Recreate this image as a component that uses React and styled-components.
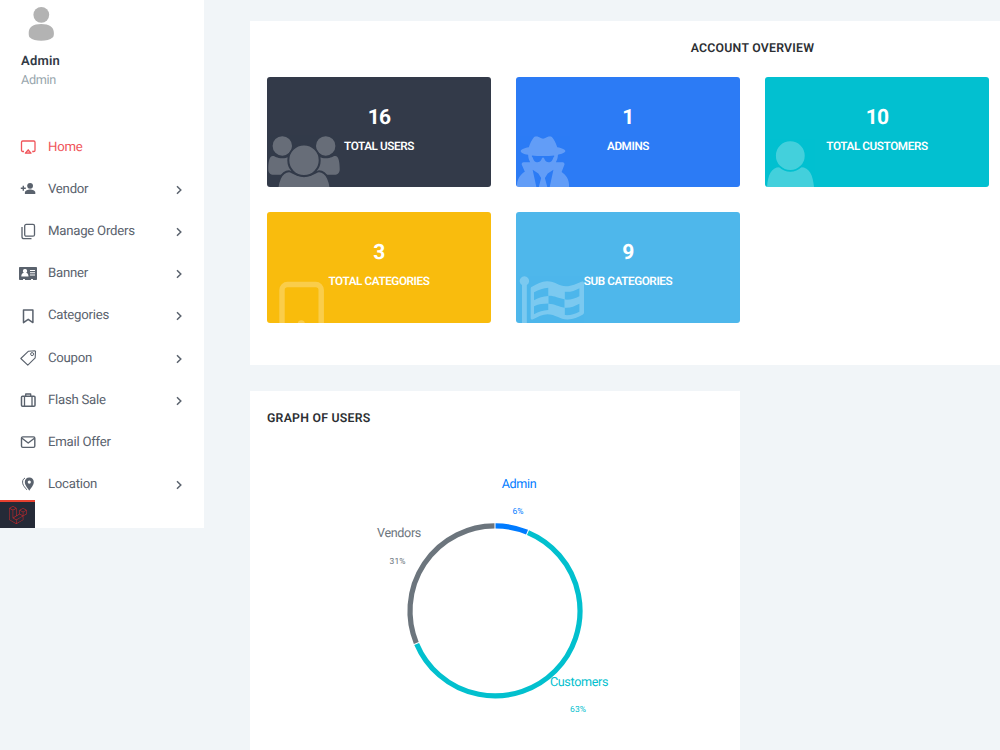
import styled, { createGlobalStyle } from "styled-components";
import { FaUserSecret } from "react-icons/fa";
import { SiLaravel } from "react-icons/si";

const menu = [
  { label: "Home", icon: AirplayIcon, active: true },
  { label: "Vendor", icon: VendorIcon, more: true },
  { label: "Manage Orders", icon: CopyIcon, more: true },
  { label: "Banner", icon: CardIcon, more: true },
  { label: "Categories", icon: BookmarkIcon, more: true },
  { label: "Coupon", icon: TagIcon, more: true },
  { label: "Flash Sale", icon: CaseIcon, more: true },
  { label: "Email Offer", icon: MailIcon },
  { label: "Location", icon: PinIcon, more: true },
];

const stats = [
  { value: 16, label: "TOTAL USERS", color: "#333a49", art: PeopleArt },
  { value: 1, label: "ADMINS", color: "#2c7bf5", art: SecretArt },
  { value: 10, label: "TOTAL CUSTOMERS", color: "#02c0d0", art: PersonArt },
  { value: 3, label: "TOTAL CATEGORIES", color: "#f9bc0d", art: TabletArt },
  { value: 9, label: "SUB CATEGORIES", color: "#4eb7eb", art: FlagArt },
];

const slices = [
  { name: "Admin", share: 1 / 16, percent: "6%", color: "#007bff", x: 269, y: 93, px: 268, py: 120 },
  { name: "Customers", share: 10 / 16, percent: "63%", color: "#02c0ce", x: 329, y: 291, px: 328, py: 318 },
  { name: "Vendors", share: 5 / 16, percent: "31%", color: "#6c757d", x: 149, y: 142.5, px: 147.5, py: 170 },
];

export default function App() {
  return (
    <>
      <GlobalStyle />
      <Page>
        <Sidebar />
        <Main>
          <Panel $width={1005} $height={343.5}>
            <PanelTitle $align="center">ACCOUNT OVERVIEW</PanelTitle>
            <StatGrid>
              {stats.map((stat) => (
                <StatCard key={stat.label} {...stat} />
              ))}
            </StatGrid>
          </Panel>
          <Panel $width={490} $height={400}>
            <PanelTitle>GRAPH OF USERS</PanelTitle>
            <UsersChart />
          </Panel>
        </Main>
      </Page>
    </>
  );
}

function Sidebar() {
  return (
    <SidebarContainer>
      <Profile>
        <svg width="40" height="44" viewBox="0 0 40 44" fill="#b3b3b3">
          <circle cx="20.3" cy="14.8" r="7.9" />
          <path d="M7.700 33c0-6 4.500-9 12.500-9s12.700 3 12.700 9c0 2.500-.4 3.800-1.300 4.600-2.500 2.200-6.700 3.200-11.400 3.200s-9-1-11.300-3.200c-.8-.8-1.200-2-1.200-4.600z" />
        </svg>
        <ProfileName>Admin</ProfileName>
        <ProfileRole>Admin</ProfileRole>
      </Profile>
      <Menu>
        {menu.map(({ label, icon: Icon, active, more }) => (
          <MenuItem key={label} $active={active}>
            <MenuIcon>
              <Icon />
            </MenuIcon>
            <MenuLabel>{label}</MenuLabel>
            {more && (
              <Chevron viewBox="0 0 8 10">
                <path d="M2 1.200 5.800 5 2 8.800" />
              </Chevron>
            )}
          </MenuItem>
        ))}
      </Menu>
      <DebugBadge>
        <SiLaravel size={18} />
      </DebugBadge>
    </SidebarContainer>
  );
}

function StatCard({ value, label, color, art: Art }) {
  return (
    <Card $color={color}>
      <CardArt viewBox="0 0 224 110">
        <Art color={color} />
      </CardArt>
      <CardValue>{value}</CardValue>
      <CardLabel>{label}</CardLabel>
    </Card>
  );
}

function UsersChart() {
  const radius = 85;
  let start = 0;
  return (
    <Chart viewBox="0 0 490 360">
      {slices.map(({ name, share, color }) => {
        const from = start * 2 * Math.PI + 0.006;
        start += share;
        const to = start * 2 * Math.PI - 0.006;
        const point = (a) =>
          `${245 + radius * Math.sin(a)} ${220.9 - radius * Math.cos(a)}`;
        return (
          <path
            key={name}
            d={`M${point(from)}A${radius} ${radius} 0 ${share > 0.5 ? 1 : 0} 1 ${point(to)}`}
            stroke={color}
            strokeWidth="5.2"
            fill="none"
          />
        );
      })}
      {slices.map(({ name, percent, color, x, y, px, py }) => (
        <g key={name} fill={color} textAnchor="middle">
          <ChartLabel x={x} y={y + 4.5}>
            {name}
          </ChartLabel>
          <ChartPercent x={px} y={py + 4}>
            {percent}
          </ChartPercent>
        </g>
      ))}
    </Chart>
  );
}

// card artwork, on the 224x110 grid of a card
function PeopleArt({ color }) {
  return (
    <>
      <circle cx="15.3" cy="68.7" r="9.7" />
      <circle cx="58.7" cy="68.7" r="9.7" />
      <path d="M1.300 92c0-7 1-13.300 4.500-13.300 2 0 4 2.300 9.500 2.300s7-2 9-2V97.500H7c-4 0-5.700-2-5.700-5.500z" />
      <path d="M72.700 92c0-7-1-13.300-4.500-13.300-2 0-4 2.300-9.500 2.300s-7-2-9-2V97.500H67c4 0 5.700-2 5.700-5.500z" />
      <g stroke={color} strokeWidth="2">
        <path d="M10 118c0-13 4-24 12-24 3 0 6 5 15 5s12-5 15-5c8 0 12 11 12 24z" />
        <circle cx="37" cy="83" r="15.7" />
      </g>
    </>
  );
}

function SecretArt() {
  return (
    <g transform="translate(1 59)">
      <FaUserSecret size={59.5} viewBox="0 0 512 512" />
    </g>
  );
}

function PersonArt({ color }) {
  return (
    <>
      <path d="M1.700 120c0-17 2-30 13-30 3 0 5 4 10.700 4s7.500-4 10.500-4c11 0 13.500 13 13.500 30z" />
      <circle cx="25.3" cy="78.4" r="15.2" stroke={color} strokeWidth="1.6" />
    </>
  );
}

function TabletArt() {
  return (
    <>
      <rect x="15" y="72.2" width="39.2" height="60" rx="5.5" fill="none" stroke="#fff" strokeWidth="5.4" />
      <circle cx="34.3" cy="111.5" r="3.5" />
    </>
  );
}

function FlagArt() {
  return (
    <>
      <path d="M6 120V72.800a4.700 4.700 0 1 1 4.800 0V120z" />
      <path
        fillRule="evenodd"
        d="M14.700 76.500c0-1 .4-1.600 1.300-2 5-2.900 9.500-5.500 15-5.500 8 0 12 5 19 5 6 0 10.500-2.600 15.500-4.500 1.400-.5 2.500.2 2.500 1.500v29c0 1.200-.5 2-1.500 2.500-4.500 2.600-9 4.700-15 4.700-8 0-12-5.200-20-5.200-5 0-9.500 2.500-14.500 5-1.300.6-2.300 0-2.300-1.300zM18 80v8c5-2.500 9-4 14.300-4.300V75.500C27 75.800 23 77.500 18 80zM32.500 83.500v8c6 0 10 3 16 4v-8.500c-6-1-10-3.700-16-3.500zM48.800 79.500v7.800c5.500.5 9.600-1 14.600-3.400v-8c-5 2.400-9 4.200-14.600 3.600zM18 94v8c5-2.500 9-4 14.300-4.300v-6.500C27 91.500 23 91.500 18 94zM48.800 95.500v7.300c5.500.5 9.600-1 14.600-3.400v-8c-5 2.400-9 4.500-14.600 4.100z"
      />
    </>
  );
}

// menu icons, on an 18x18 grid
function AirplayIcon() {
  return (
    <Icon>
      <path d="M5 13.500H3.700c-.7 0-1.200-.5-1.200-1.200V4.200C2.500 3.500 3 3 3.700 3h11.100c.7 0 1.200.5 1.200 1.200v8.100c0 .7-.5 1.200-1.200 1.200h-1.600" />
      <path d="M9.200 11.800 12 15.200H6.400z" strokeWidth="1.3" fill="currentColor" fillOpacity="0.4" />
    </Icon>
  );
}

function VendorIcon() {
  return (
    <Icon>
      <path d="M4.300 5.800v5M1.800 8.300h5" strokeWidth="1.4" />
      <g fill="currentColor" stroke="none">
        <circle cx="11.1" cy="5.800" r="2.9" />
        <path d="M5.900 14v-1.500c0-1.900 3-2.900 5.200-2.900s5.200 1 5.200 2.900V14z" />
      </g>
    </Icon>
  );
}

function CopyIcon() {
  return (
    <Icon>
      <rect x="5.7" y="2.4" width="9.8" height="11.8" rx="1.5" />
      <path d="M3 5v9.700c0 1.200.8 2 2 2H12.500" />
    </Icon>
  );
}

function CardIcon() {
  return (
    <Icon>
      <path
        fill="currentColor"
        stroke="none"
        fillRule="evenodd"
        d="M.8 2h16.400c.5 0 .8.300.8.800v11.400c0 .5-.3.800-.8.800H14v-1h-2v1H6v-1H4v1H.8c-.5 0-.8-.3-.8-.8V2.800C0 2.300.3 2 .8 2zM6 4a2 2 0 0 0-1.200 3.700C3 8.200 2.300 9.500 2.300 11.500h7.200c0-2-.7-3.300-2.300-3.800A2 2 0 0 0 6 4zm5 1v1h5V5zm0 2.200v1h5v-1zm0 2.200v1h5v-1z"
      />
    </Icon>
  );
}

function BookmarkIcon() {
  return (
    <Icon>
      <path d="M4.500 3h9.400v12.600L9.200 12.300l-4.700 3.300z" strokeWidth="1.5" />
    </Icon>
  );
}

function TagIcon() {
  return (
    <Icon>
      <path d="M9.500 2.200 16 1.800l.5.500-.3 6.500-7.400 7.300-7-6.600z" strokeWidth="1.1" />
      <circle cx="13.1" cy="5.1" r="1.5" strokeWidth="1" />
    </Icon>
  );
}

function CaseIcon() {
  return (
    <Icon>
      <rect x="2.5" y="5.2" width="13.5" height="10" rx="1" strokeWidth="1.5" />
      <path d="M5.500 5.200v10M13 5.200v10M6.700 5V3h5V5" />
    </Icon>
  );
}

function MailIcon() {
  return (
    <Icon>
      <rect x="2.5" y="3.9" width="13.3" height="10.5" rx="1.3" strokeWidth="1.4" />
      <path d="M3 5.200l6.200 4.800L15.400 5.200" strokeWidth="1.4" />
    </Icon>
  );
}

function PinIcon() {
  return (
    <Icon>
      <path
        fill="currentColor"
        stroke="none"
        fillRule="evenodd"
        d="M10.300 1.500c2.600 0 4.500 1.900 4.500 4.500 0 3.500-3 6-4.500 8.800C8.800 12 5.800 9.500 5.800 6c0-2.600 1.900-4.500 4.500-4.500zm0 3a1.600 1.600 0 1 0 0 3.200 1.600 1.600 0 0 0 0-3.200z"
      />
      <path d="M6 2C3.600 3.300 3.200 5.500 3.800 7.800c.5 2 2.300 3.800 4 6" strokeWidth="1" />
    </Icon>
  );
}

const GlobalStyle = createGlobalStyle`
  * {
    box-sizing: border-box;
  }

  body {
    margin: 0;
    background: #f1f5f8;
    font-family: Roboto, "Liberation Sans", sans-serif;
    text-rendering: geometricPrecision;
    overflow: hidden;
  }
`;

const Page = styled.div`
  display: flex;
  align-items: flex-start;
  height: 750px;
  overflow: hidden;
`;

const SidebarContainer = styled.aside`
  position: relative;
  flex: none;
  width: 204px;
  height: 528px;
  background: #fff;
`;

const Profile = styled.div`
  height: 126px;
  padding-left: 21px;

  svg {
    display: block;
  }
`;

const ProfileName = styled.div`
  margin-top: 9px;
  color: #323a46;
  font-size: 13px;
  font-weight: 600;
  line-height: 18px;
  letter-spacing: 0.2px;
`;

const ProfileRole = styled.div`
  color: #98a6ad;
  font-size: 12.7px;
  line-height: 19px;
  letter-spacing: -0.35px;
`;

const Menu = styled.ul`
  margin: 0;
  padding: 0;
  list-style: none;
`;

const MenuItem = styled.li`
  display: flex;
  align-items: center;
  height: 42.2px;
  padding: 0 21px 0 19px;
  color: ${(props) => (props.$active ? "#f0555b" : "#5a626d")};
`;

const MenuIcon = styled.span`
  display: flex;
  align-items: center;
  justify-content: center;
  width: 18px;
  height: 18px;
  margin-right: 11px;
`;

const MenuLabel = styled.span`
  flex: 1;
  font-size: 13.2px;
  letter-spacing: -0.25px;
`;

const Chevron = styled.svg`
  width: 8px;
  height: 10px;
  margin-top: 1px;
  fill: none;
  stroke: #5a626d;
  stroke-width: 1.5;
`;

const Icon = styled.svg.attrs({ viewBox: "0 0 18 18" })`
  flex: none;
  width: 18px;
  height: 18px;
  fill: none;
  stroke: currentColor;
  stroke-width: 1.3;
  stroke-linejoin: round;
`;

const DebugBadge = styled.div`
  position: absolute;
  left: 0;
  bottom: 0;
  display: flex;
  align-items: center;
  justify-content: center;
  width: 34.5px;
  height: 28px;
  padding-left: 1px;
  border-top: 2px solid #e8402f;
  background: #252a37;
  color: #c9282b;
`;

const Main = styled.main`
  display: flex;
  flex-direction: column;
  gap: 26px;
  padding: 21px 0 0 46px;
`;

const Panel = styled.section`
  flex: none;
  width: ${(props) => props.$width}px;
  height: ${(props) => props.$height}px;
  background: #fff;
`;

const PanelTitle = styled.h4`
  margin: 0;
  padding: 19px 17px 0;
  color: #2c2f33;
  font-size: 12.3px;
  font-weight: 600;
  line-height: 19px;
  letter-spacing: 0.24px;
  text-align: ${(props) => props.$align || "left"};
`;

const StatGrid = styled.div`
  display: grid;
  grid-template-columns: repeat(3, 224px);
  grid-auto-rows: 110.5px;
  gap: 25px;
  padding: 17.5px 17px 0;
`;

const Card = styled.div`
  position: relative;
  overflow: hidden;
  padding-top: 28px;
  border-radius: 3px;
  background: ${(props) => props.$color};
  color: #fff;
  text-align: center;
`;

const CardArt = styled.svg`
  position: absolute;
  left: 0;
  top: 0;
  width: 224px;
  height: 110.5px;
  fill: #fff;
  color: #fff;
  opacity: 0.26;
`;

const CardValue = styled.div`
  position: relative;
  font-size: 21px;
  font-weight: 700;
  line-height: 26px;
  letter-spacing: -0.7px;
`;

const CardLabel = styled.div`
  position: relative;
  margin-top: 7px;
  font-size: 11.7px;
  font-weight: 600;
  line-height: 16px;
  letter-spacing: -0.4px;
`;

const Chart = styled.svg`
  display: block;
  width: 490px;
  height: 360px;
  margin-top: -39px;
`;

const ChartLabel = styled.text`
  font-size: 12.6px;
  letter-spacing: -0.35px;
`;

const ChartPercent = styled.text`
  font-size: 8.5px;
`;
